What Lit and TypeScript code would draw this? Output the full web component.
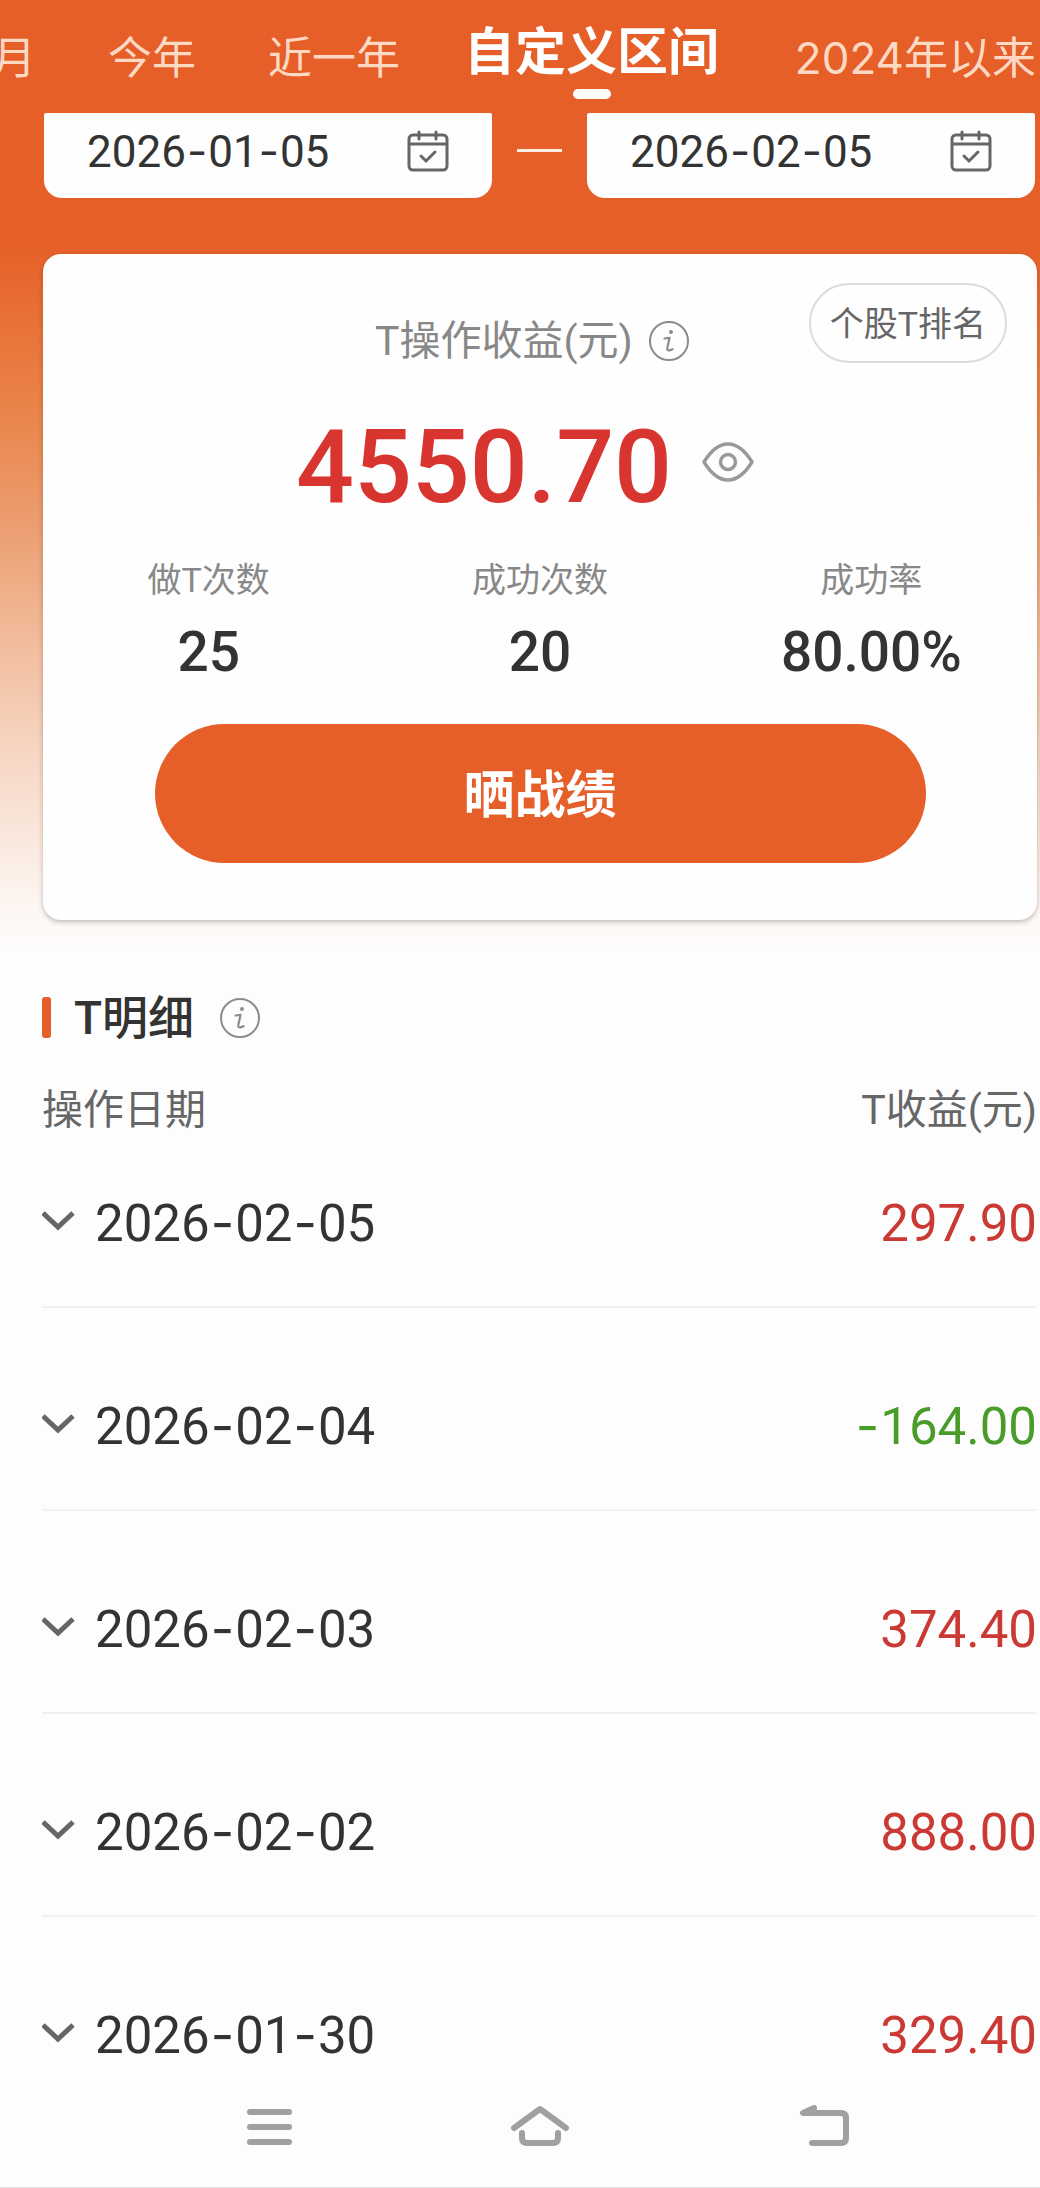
import { LitElement, html, svg, css } from "lit";
import { customElement, property, state } from "lit/decorators.js";
import { classMap } from "lit/directives/class-map.js";

interface DayRecord {
  date: string;
  profit: string;
}

const TABS = ["月", "今年", "近一年", "自定义区间", "2024年以来"];

const STATS = [
  { label: "做T次数", value: "25" },
  { label: "成功次数", value: "20" },
  { label: "成功率", value: "80.00%" },
];

const RECORDS: DayRecord[] = [
  { date: "2026-02-05", profit: "297.90" },
  { date: "2026-02-04", profit: "-164.00" },
  { date: "2026-02-03", profit: "374.40" },
  { date: "2026-02-02", profit: "888.00" },
  { date: "2026-01-30", profit: "329.40" },
];

/* Wide hyphens between the parts of a number or date. */
const wideDash = (text: string) =>
  text.split(/(-)/).map((part) => (part === "-" ? html`<span class="dash">-</span>` : part));

const calendarIcon = html`<svg class="calendar" viewBox="0 0 42 42" aria-hidden="true">
  <g fill="none" stroke="#666" stroke-width="3">
    <rect x="2" y="5" width="38" height="35" rx="4" />
    <path d="M2 14H40" />
    <path d="M12 2V9M29 2V9" stroke-linecap="round" />
    <path d="M14 26L19 31L28 22" stroke-linecap="round" />
  </g>
</svg>`;

const infoIcon = html`<svg class="info-icon" viewBox="0 0 40 40" aria-hidden="true">
  <circle cx="20" cy="20" r="19" fill="none" stroke="#8c8c8c" stroke-width="2" />
  <circle cx="22" cy="11" r="2" fill="#8c8c8c" />
  <path
    d="M15.5 17.5L20.6 16.8L18.4 26.5Q17.8 30 20.4 29.4L23.6 28.2"
    fill="none" stroke="#8c8c8c" stroke-width="2.2" stroke-linecap="round" stroke-linejoin="round"
  />
</svg>`;

@customElement("date-field")
export class DateField extends LitElement {
  static styles = css`
    :host {
      display: block;
      flex: 1;
    }
    .field {
      display: flex;
      align-items: center;
      justify-content: space-between;
      width: 100%;
      padding: 13px 43px 19px;
      border: 0;
      border-radius: 2px 2px 18px 18px;
      background: #fefefe;
      color: #333;
      font: 400 44px/53px Roboto, "Noto Sans CJK SC", sans-serif;
    }
    .dash {
      margin: 0 1px;
      font-family: Inter, sans-serif;
      line-height: 0;
    }
    .calendar {
      width: 42px;
      height: 42px;
      margin-bottom: 4px;
    }
  `;

  @property() value = "";
  @property() name = "";

  render() {
    return html`<button class="field" type="button" aria-label="${this.name} ${this.value}">
      <span>${wideDash(this.value)}</span>${calendarIcon}
    </button>`;
  }
}

@customElement("app-root")
export class AppRoot extends LitElement {
  static styles = css`
    :host {
      display: block;
      background: #fdfdfd;
      color: #333;
      font-family: Roboto, "Noto Sans CJK SC", sans-serif;
    }
    button {
      margin: 0;
      padding: 0;
      border: 0;
      background: none;
      color: inherit;
      font: inherit;
      cursor: pointer;
    }
    h2,
    dl,
    dd {
      margin: 0;
    }
    svg {
      display: block;
      flex: none;
    }

    .hero {
      padding-bottom: 34px;
      background: linear-gradient(
        #e65e28 0,
        #e65e28 235px,
        #e87136 320px,
        #ea8850 430px,
        #ec9f72 530px,
        #f1b998 630px,
        #f6d3bf 740px,
        #fae8de 840px,
        #fdf7f3 910px,
        #fdfdfd 952px
      );
    }

    .tabs {
      display: flex;
      gap: 56px;
      height: 113px;
      overflow: hidden;
    }
    .tab {
      display: flex;
      flex-direction: column;
      align-items: center;
      flex: none;
      padding: 28px 8px 0;
      color: #fdd9c4;
      font: 400 44px/60px Inter, "Noto Sans CJK SC", sans-serif;
      white-space: nowrap;
    }
    .tab:first-child {
      margin-left: -16px;
    }
    .tab:last-child {
      margin-left: auto;
      padding-right: 4px;
    }
    .tab.active {
      gap: 7px;
      padding: 22px 0 0;
      color: #fff;
      font-size: 51px;
      font-weight: 700;
    }
    .indicator {
      width: 38px;
      height: 10px;
      border-radius: 5px;
      background: #fff;
    }

    .range {
      display: flex;
      align-items: center;
      gap: 25px;
      padding: 0 5px 0 44px;
    }
    .to {
      width: 45px;
      height: 3px;
      margin-bottom: 10px;
      background: #fdeee4;
    }

    .card {
      position: relative;
      margin: 56px 3px 0 43px;
      padding: 57px 0;
      border-radius: 18px;
      background: #fefefe;
      box-shadow: 0 2px 5px rgba(60, 40, 30, 0.3);
    }
    .rank {
      position: absolute;
      top: 29px;
      right: 30px;
      padding: 15px 19px 13px;
      border: 2px solid #dcdcdc;
      border-radius: 40px;
      color: #666;
      font-size: 34px;
      line-height: 48px;
    }
    .caption {
      display: flex;
      align-items: center;
      justify-content: center;
      gap: 16px;
      padding-right: 16px;
      color: #888;
      font-size: 41px;
      line-height: 60px;
    }
    .info-icon {
      width: 40px;
      height: 40px;
    }
    .amount {
      display: flex;
      align-items: center;
      justify-content: center;
      gap: 30px;
      margin-top: 36px;
      padding-right: 30px;
      color: #d93530;
      font-size: 102px;
      font-weight: 500;
      line-height: 120px;
    }
    .eye {
      width: 52px;
      height: 40px;
      margin-bottom: 10px;
    }
    .stats {
      display: grid;
      grid-template-columns: repeat(3, 1fr);
      margin-top: 28px;
      text-align: center;
    }
    .stat-label {
      color: #888;
      font-size: 34px;
      line-height: 50px;
    }
    .stat-value {
      margin-top: 15px;
      font-size: 55px;
      font-weight: 500;
      line-height: 64px;
    }
    .share {
      display: block;
      width: calc(100% - 223px);
      margin: 40px auto 0;
      padding-top: 5px;
      border-radius: 70px;
      background: #e65e28;
      color: #fff;
      font-size: 51px;
      font-weight: 700;
      line-height: 134px;
    }

    .details {
      padding: 32px 3px 0 42px;
    }
    .heading {
      display: flex;
      align-items: center;
      line-height: 64px;
    }
    .heading::before {
      content: "";
      width: 9px;
      height: 41px;
      margin: 0 23px 2px 0;
      border-radius: 3px;
      background: #e65e28;
    }
    .heading h2 {
      margin-right: 26px;
      font-size: 46px;
      font-weight: 500;
    }
    .records {
      width: 100%;
      border-collapse: collapse;
    }
    th {
      padding: 30px 0 10px;
      color: #666;
      font-size: 41px;
      font-weight: 400;
      line-height: 60px;
      text-align: left;
    }
    th:last-child,
    td:last-child {
      text-align: right;
    }
    td {
      padding: 89px 0 52px;
      border-bottom: 2px solid #f1f1f1;
      font-size: 51px;
      line-height: 60px;
    }
    tr:first-child td {
      padding-top: 44px;
    }
    tr:last-child td {
      padding-bottom: 0;
      border-bottom: 0;
    }
    .toggle {
      display: flex;
      align-items: center;
      gap: 19px;
    }
    .chevron {
      width: 34px;
      height: 22px;
      margin-bottom: 6px;
    }
    .chevron.open {
      rotate: 180deg;
    }
    .dash {
      margin: 0 1px;
      font-family: Inter, sans-serif;
      line-height: 0;
    }
    .gain {
      color: #cb3934;
    }
    .loss {
      color: #4a9c2a;
    }

    .system {
      display: flex;
      justify-content: space-between;
      align-items: center;
      height: 121px;
      padding: 0 190px 0 230px;
      border-bottom: 1px solid #e2e2e2;
    }
    .key {
      width: 80px;
      height: 44px;
    }
  `;

  @state() private activeTab = 3;
  @state() private open = new Set<string>();

  private toggle(date: string) {
    const next = new Set(this.open);
    next.has(date) ? next.delete(date) : next.add(date);
    this.open = next;
  }

  private renderTab(label: string, index: number) {
    const active = index === this.activeTab;
    return html`<button
      class=${classMap({ tab: true, active })}
      type="button"
      role="tab"
      aria-selected=${active}
      @click=${() => (this.activeTab = index)}
    ><span>${label}</span>${active ? html`<span class="indicator"></span>` : ""}</button>`;
  }

  private renderRecord({ date, profit }: DayRecord) {
    const loss = profit.startsWith("-");
    const open = this.open.has(date);
    return html`<tr>
      <td>
        <button class="toggle" type="button" aria-expanded=${open} @click=${() => this.toggle(date)}>
          <svg class=${classMap({ chevron: true, open })} viewBox="0 0 34 22" aria-hidden="true">
            <path d="M1 3L16 17L31 3" fill="none" stroke="#666" stroke-width="5" />
          </svg>
          <span>${wideDash(date)}</span>
        </button>
      </td>
      <td class=${classMap({ gain: !loss, loss })}>${wideDash(profit)}</td>
    </tr>`;
  }

  private renderKey(name: string, shape: unknown) {
    return html`<button type="button" aria-label=${name}>
      <svg class="key" viewBox="0 0 80 44" aria-hidden="true">
        <g fill="none" stroke="#a0a0a0" stroke-width="6" stroke-linecap="round" stroke-linejoin="round">${shape}</g>
      </svg>
    </button>`;
  }

  render() {
    return html`
      <section class="hero">
        <div class="tabs" role="tablist">${TABS.map((t, i) => this.renderTab(t, i))}</div>
        <div class="range">
          <date-field name="开始日期" value="2026-01-05"></date-field>
          <span class="to"></span>
          <date-field name="结束日期" value="2026-02-05"></date-field>
        </div>
        <div class="card">
          <button class="rank" type="button">个股T排名</button>
          <div class="caption"><span>T操作收益(元)</span><button type="button" aria-label="说明">${infoIcon}</button></div>
          <div class="amount">
            <span>4550.70</span>
            <button type="button" aria-label="隐藏金额">
              <svg class="eye" viewBox="0 0 52 40" aria-hidden="true">
                <g fill="none" stroke="#999" stroke-width="3.4" stroke-linejoin="round">
                  <path d="M2 20Q13 2 26 2T50 20Q39 38 26 38T2 20Z" />
                  <circle cx="26" cy="20" r="7.5" />
                </g>
              </svg>
            </button>
          </div>
          <dl class="stats">
            ${STATS.map(
              (s) => html`<div><dt class="stat-label">${s.label}</dt><dd class="stat-value">${s.value}</dd></div>`
            )}
          </dl>
          <button class="share" type="button">晒战绩</button>
        </div>
      </section>
      <section class="details">
        <div class="heading"><h2>T明细</h2><button type="button" aria-label="说明">${infoIcon}</button></div>
        <table class="records">
          <thead>
            <tr><th scope="col">操作日期</th><th scope="col">T收益(元)</th></tr>
          </thead>
          <tbody>${RECORDS.map((r) => this.renderRecord(r))}</tbody>
        </table>
      </section>
      <nav class="system">
        ${this.renderKey("菜单", svg`<path d="M20 7H59M20 22H59M20 37H59" />`)}
        ${this.renderKey("主页", svg`<path d="M14 23L40 4L66 23M22 28V33Q22 38 27 38H53Q58 38 58 33V28" />`)}
        ${this.renderKey("返回", svg`<path d="M44 3L33 8H71Q76 8 76 13V33Q76 38 71 38H42" />`)}
      </nav>
    `;
  }
}
